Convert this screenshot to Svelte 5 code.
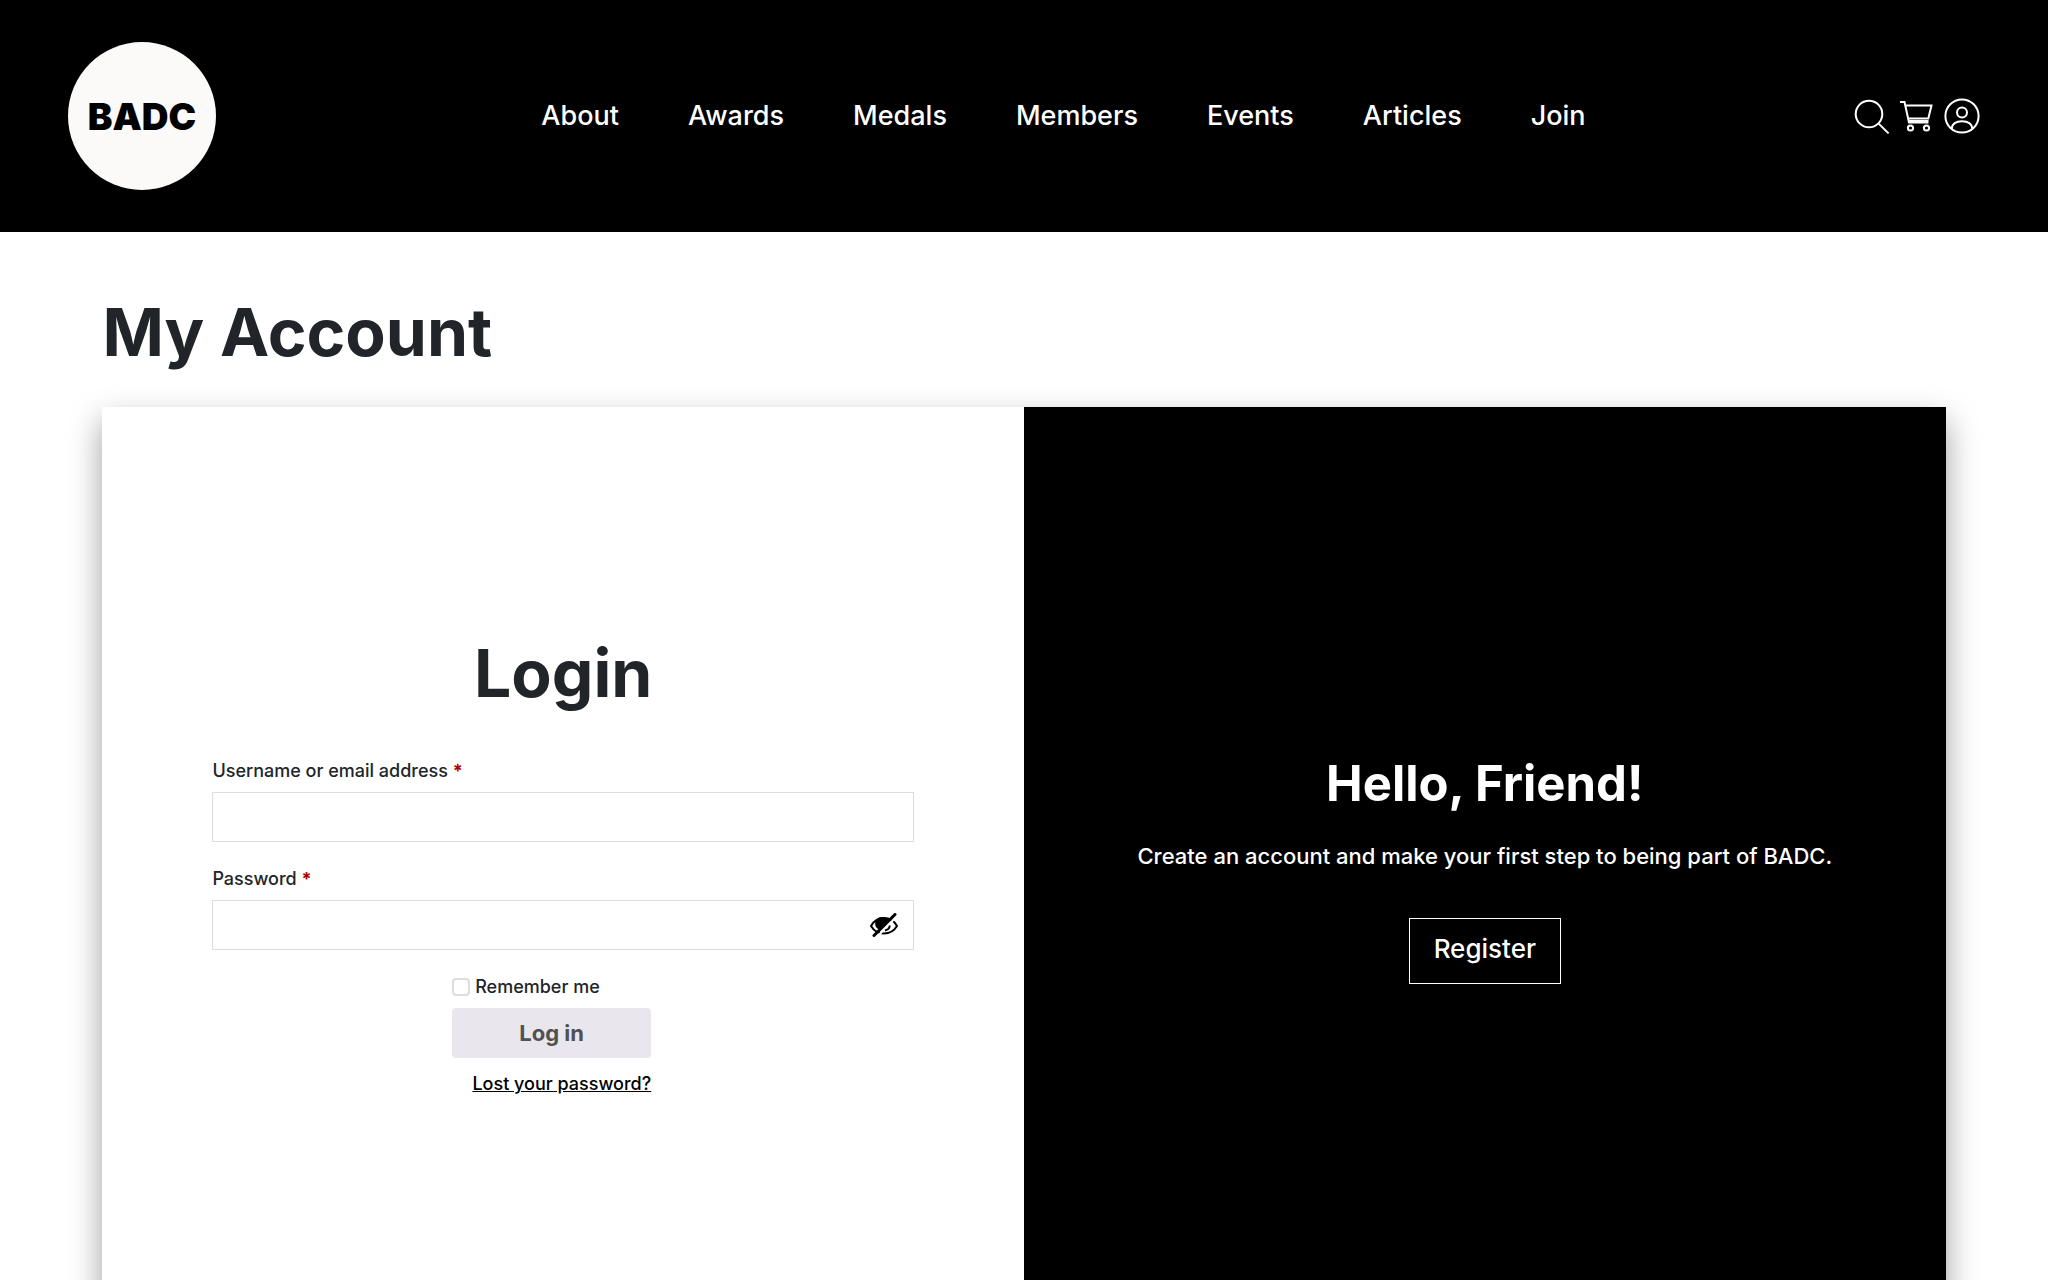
<script lang="ts">
	const links = ['About', 'Awards', 'Medals', 'Members', 'Events', 'Articles', 'Join'];

	let username = $state('');
	let password = $state('');
	let remember = $state(false);
	let showPassword = $state(false);
</script>

<header class="header">
	<a href="/" class="logo">BADC</a>

	<nav class="nav">
		{#each links as link}
			<a href="/{link.toLowerCase()}">{link}</a>
		{/each}
	</nav>

	<div class="tools">
		<a href="/search" aria-label="Search">
			<svg width="36" height="36" viewBox="0 0 36 36">
				<circle cx="15" cy="16" r="13.3" />
				<path d="M24.4 25.4 34.6 35.4" />
			</svg>
		</a>
		<a href="/cart" aria-label="Cart">
			<svg width="34" height="32" viewBox="0 0 34 32">
				<path d="M0 2h4.500l4.500 20.500h19.500M5.500 5.500h26L28.300 18.500H8.300M8.800 21h19.700" />
				<circle cx="10.500" cy="28" r="2.600" />
				<circle cx="26.500" cy="28" r="2.600" />
			</svg>
		</a>
		<a href="/my-account" aria-label="My account">
			<svg width="36" height="36" viewBox="0 0 36 36">
				<circle cx="18" cy="18" r="16.6" />
				<circle cx="18" cy="14.6" r="5" />
				<path d="M7.6 30.8c.4-5 4-7.6 10.4-7.6s10 2.6 10.4 7.6" />
			</svg>
		</a>
	</div>
</header>

<main class="page">
	<h1>My Account</h1>

	<div class="card">
		<section class="login">
			<h2>Login</h2>
			<form onsubmit={(e) => e.preventDefault()}>
				<div class="field">
					<label for="username">Username or email address <span class="required">*</span></label>
					<input id="username" type="text" autocomplete="username" bind:value={username} />
				</div>
				<div class="field">
					<label for="password">Password <span class="required">*</span></label>
					<div class="password">
						<input id="password" type={showPassword ? 'text' : 'password'} autocomplete="current-password" bind:value={password} />
						<button type="button" class="toggle" aria-label="Show password" onclick={() => (showPassword = !showPassword)}>
							<svg width="28" height="24" viewBox="0 0 28 24">
								<path class="lid" d="M1 13C4 7.500 8.500 5 14 5s10 2.500 13 8c-3 5-7.500 7.500-13 7.500S4 18 1 13z" />
								<path class="iris" d="M14 4.500a6.500 6.500 0 0 0-5 12L19 6C18 5 16 4.500 14 4.500z" />
								<path class="gap" d="M6.500 24.500 27.500 2.500" />
								<path class="slash" d="M4 22.500 25 1.500" />
								<path class="lid" d="M15 17.500c2.500-.5 4.500-2.500 4.800-5" />
							</svg>
						</button>
					</div>
				</div>
				<div class="submit">
					<label class="remember">
						<input type="checkbox" bind:checked={remember} />
						<span>Remember me</span>
					</label>
					<button type="submit" class="login-button">Log in</button>
					<a href="/lost-password" class="lost">Lost your password?</a>
				</div>
			</form>
		</section>

		<section class="register">
			<h2>Hello, Friend!</h2>
			<p>Create an account and make your first step to being part of BADC.</p>
			<a href="/register" class="register-button">Register</a>
		</section>
	</div>
</main>

<style>
	:global(body) {
		background: #fff;
		color: #212529;
		font-family: Inter, "Liberation Sans", sans-serif;
	}

	* {
		box-sizing: border-box;
	}

	h1,
	h2,
	p {
		margin: 0;
	}

	.header {
		display: grid;
		grid-template-columns: 6fr auto 5fr;
		align-items: center;
		padding: 42px 68px;
		background: #000;
	}

	.logo {
		display: flex;
		align-items: center;
		justify-content: center;
		width: 148px;
		height: 148px;
		border-radius: 50%;
		background: #fbfaf8;
		color: #000;
		font-size: 37px;
		font-weight: 900;
		text-decoration: none;
	}

	.nav {
		display: flex;
		gap: 69px;
	}

	.nav a {
		color: #fff;
		font-size: 27px;
		line-height: 36px;
		font-weight: 500;
		text-decoration: none;
	}

	.tools {
		display: flex;
		align-items: center;
		justify-content: flex-end;
		gap: 10px;
	}

	.tools a {
		display: flex;
	}

	.tools svg {
		fill: none;
		stroke: #fff;
		stroke-width: 2;
	}

	.page {
		padding: 60px 5%;
	}

	h1 {
		font-size: 66px;
		line-height: 80px;
		font-weight: 700;
		margin-bottom: 35px;
	}

	.card {
		display: grid;
		grid-template-columns: 1fr 1fr;
		box-shadow: 0 14px 30px rgba(0, 0, 0, 0.38);
	}

	.login {
		padding: 226px 110px 232px;
		background: #fff;
	}

	.login h2 {
		font-size: 66px;
		line-height: 80px;
		text-align: center;
		margin-bottom: 44px;
	}

	.field {
		display: flex;
		flex-direction: column;
		gap: 7px;
		margin-bottom: 23px;
		font-size: 18px;
		line-height: 28px;
		font-weight: 500;
	}

	.required {
		color: #a00;
		font-weight: 700;
	}

	.field input {
		width: 100%;
		height: 50px;
		padding: 0 16px;
		border: 1px solid #ddd;
		background: #fff;
		font: inherit;
	}

	.password {
		display: flex;
		position: relative;
	}

	.toggle {
		position: absolute;
		top: 0;
		right: 16px;
		height: 50px;
		padding: 0;
		border: 0;
		background: none;
		cursor: pointer;
	}

	.toggle svg {
		display: block;
		fill: none;
	}

	.lid {
		stroke: #000;
		stroke-width: 2;
	}

	.iris {
		fill: #000;
	}

	.gap {
		stroke: #fff;
		stroke-width: 2;
	}

	.slash {
		stroke: #000;
		stroke-width: 3;
		stroke-linecap: round;
	}

	.submit {
		display: flex;
		flex-direction: column;
		width: 222px;
		margin: 0 auto;
		font-size: 18px;
		line-height: 28px;
		font-weight: 500;
	}

	.remember {
		display: flex;
		align-items: center;
		gap: 5px;
		margin-bottom: 7px;
	}

	.remember input {
		appearance: none;
		width: 18px;
		height: 18px;
		margin: 0;
		border: 2px solid #ddd;
		border-radius: 4px;
		background: #fff;
	}

	.remember input:checked {
		background: #515151;
	}

	.login-button {
		width: 199px;
		height: 50px;
		margin-bottom: 12px;
		border: 0;
		border-radius: 4px;
		background: #e9e6ed;
		color: #515151;
		font: inherit;
		font-size: 22px;
		font-weight: 700;
		cursor: pointer;
	}

	.lost {
		width: 199px;
		color: #000;
		text-align: right;
	}

	.register {
		display: flex;
		flex-direction: column;
		align-items: center;
		justify-content: center;
		padding: 48px;
		background: #000;
		color: #fff;
		text-align: center;
	}

	.register h2 {
		font-size: 49px;
		line-height: 60px;
		margin-bottom: 24px;
	}

	.register p {
		font-size: 22px;
		line-height: 36px;
		font-weight: 500;
		margin-bottom: 44px;
	}

	.register-button {
		padding: 12px 24px 16px;
		border: 1px solid #fff;
		color: #fff;
		font-size: 26px;
		line-height: 36px;
		font-weight: 500;
		text-decoration: none;
	}
</style>
